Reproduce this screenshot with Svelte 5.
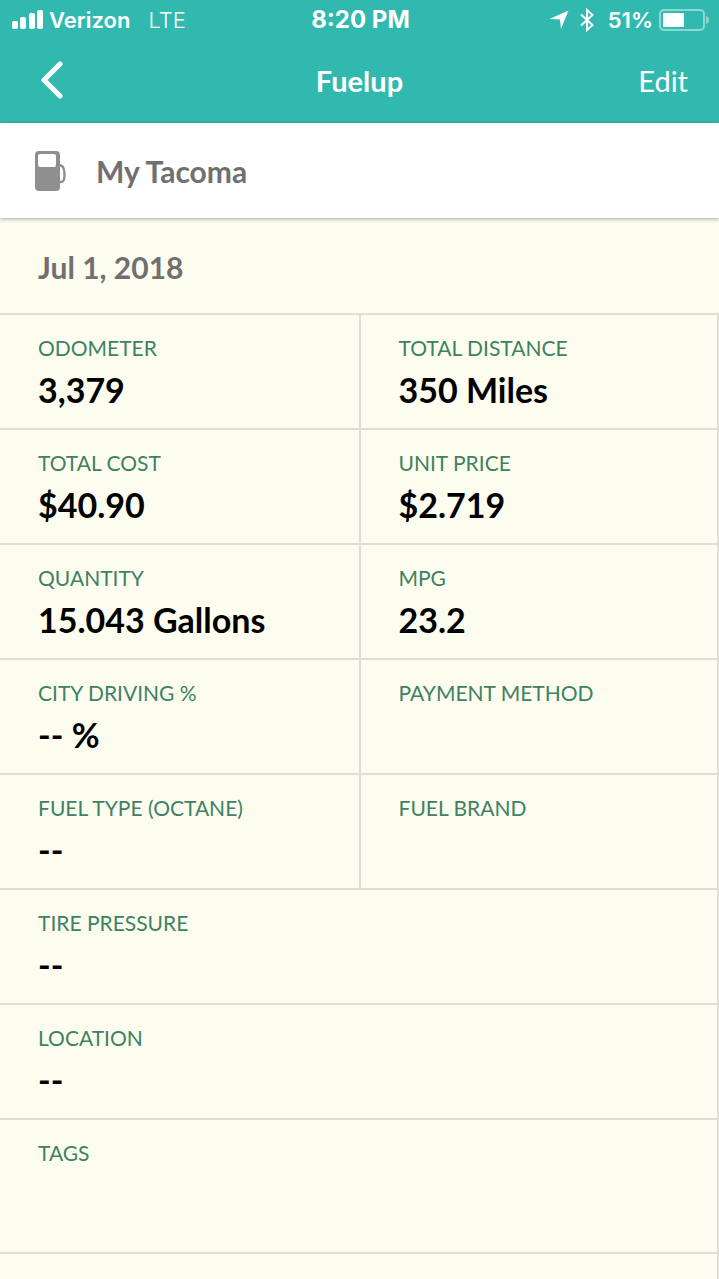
<script lang="ts">
  interface Field {
    label: string;
    value?: string;
    wide?: boolean;
    tall?: boolean;
  }

  const vehicle = 'My Tacoma';
  const date = 'Jul 1, 2018';
  const battery = 51;

  const fields: Field[] = [
    { label: 'Odometer', value: '3,379' },
    { label: 'Total Distance', value: '350 Miles' },
    { label: 'Total Cost', value: '$40.90' },
    { label: 'Unit Price', value: '$2.719' },
    { label: 'Quantity', value: '15.043 Gallons' },
    { label: 'MPG', value: '23.2' },
    { label: 'City Driving %', value: '-- %' },
    { label: 'Payment Method' },
    { label: 'Fuel Type (Octane)', value: '--' },
    { label: 'Fuel Brand' },
    { label: 'Tire Pressure', value: '--', wide: true },
    { label: 'Location', value: '--', wide: true },
    { label: 'Tags', wide: true, tall: true },
  ];
</script>

<div class="screen">
  <header>
    <div class="status">
      <div class="carrier">
        <svg width="32" height="20" viewBox="0 0 32 20" fill="currentColor">
          <rect x="0" y="11" width="6" height="8" rx="2" />
          <rect x="8" y="7" width="6" height="12" rx="2" />
          <rect x="17" y="3" width="6" height="16" rx="2" />
          <rect x="25" y="0" width="6" height="19" rx="2" />
        </svg>
        <span class="name">Verizon</span>
        <span class="network">LTE</span>
      </div>
      <div class="time">8:20 PM</div>
      <div class="indicators">
        <svg width="20" height="20" viewBox="0 0 20 20" fill="currentColor">
          <path d="M19.5 0.5 L12 19 L11 9.5 L0.5 9 Z" />
        </svg>
        <svg class="bluetooth" width="14" height="24" viewBox="0 0 14 24" fill="none" stroke="currentColor" stroke-width="2">
          <path d="M1 6.5 L12.5 17 L7 22 V2 L12.5 7 L1 17.5" />
        </svg>
        <span class="percent">{battery}%</span>
        <svg width="50" height="22" viewBox="0 0 50 22">
          <rect x="1" y="1" width="44" height="20" rx="4" fill="none" stroke="#fff" stroke-opacity="0.45" stroke-width="2" />
          <rect x="4" y="4" width={battery * 0.41} height="14" rx="1" fill="#fff" />
          <path d="M47 7 Q50 8 50 11 Q50 14 47 15 Z" fill="#fff" fill-opacity="0.45" />
        </svg>
      </div>
    </div>
    <nav>
      <button class="back" aria-label="Back">
        <svg width="24" height="40" viewBox="0 0 24 40" fill="none" stroke="currentColor" stroke-width="5" stroke-linecap="round" stroke-linejoin="round">
          <path d="M20 3 L4 19 L20 35" />
        </svg>
      </button>
      <h1>Fuelup</h1>
      <button class="edit">Edit</button>
    </nav>
  </header>

  <section class="vehicle">
    <svg width="32" height="40" viewBox="0 0 32 40">
      <rect x="0" y="0" width="25" height="40" rx="4" fill="#8f8f8f" />
      <rect x="3" y="3" width="18" height="13" rx="2" fill="#fff" />
      <path d="M24 14 C28 14 29.5 18 29.5 23 C29.5 28 29 31 26.5 31 L24 31" fill="none" stroke="#8f8f8f" stroke-width="2.4" />
    </svg>
    <h2>{vehicle}</h2>
  </section>

  <main>
    <h2 class="date">{date}</h2>
    <dl>
      {#each fields as field}
        <div class="field" class:wide={field.wide} class:tall={field.tall}>
          <dt>{field.label}</dt>
          <dd>{field.value ?? ''}</dd>
        </div>
      {/each}
    </dl>
  </main>
</div>

<style>
  :global(body) {
    margin: 0;
    background: #fdfdef;
  }

  .screen {
    display: flex;
    flex-direction: column;
    min-height: 100vh;
    font-family: Lato, sans-serif;
    color: #000;
  }

  header {
    background: #32b9af;
    color: #fff;
  }

  .status {
    display: grid;
    grid-template-columns: 1fr auto 1fr;
    align-items: center;
    height: 40px;
    padding: 0 10px 0 12px;
    font-family: Inter, sans-serif;
    font-size: 22px;
    line-height: 28px;
  }

  .carrier,
  .indicators {
    display: flex;
    align-items: center;
  }

  .name {
    margin-left: 5px;
    font-weight: 600;
  }

  .network {
    margin-left: 18px;
    font-weight: 300;
  }

  .time {
    font-weight: 700;
    font-size: 24px;
  }

  .indicators {
    justify-content: flex-end;
  }

  .bluetooth {
    margin: 0 14px 0 11px;
  }

  .percent {
    margin-right: 6px;
    font-weight: 600;
  }

  nav {
    display: grid;
    grid-template-columns: 1fr auto 1fr;
    align-items: center;
    height: 83px;
    box-sizing: border-box;
    padding: 0 31px 2px;
  }

  h1 {
    margin: 0;
    font-size: 29px;
    font-weight: 700;
    line-height: 40px;
  }

  button {
    padding: 0;
    border: 0;
    background: none;
    color: inherit;
    font: inherit;
    cursor: pointer;
  }

  .back {
    display: flex;
    justify-self: start;
    padding-left: 9px;
  }

  .edit {
    justify-self: end;
    font-size: 29px;
    line-height: 40px;
  }

  .vehicle {
    display: flex;
    align-items: center;
    gap: 29px;
    position: relative;
    height: 95px;
    padding: 0 35px;
    background: #fff;
    box-shadow: 0 1px 4px rgba(0, 0, 0, 0.35);
  }

  h2 {
    margin: 0;
    color: #707070;
    font-size: 30px;
    font-weight: 700;
    line-height: 40px;
  }

  main {
    display: flex;
    flex: 1;
    flex-direction: column;
    background: #fdfdef;
  }

  .date {
    padding: 29px 38px 26px;
  }

  dl {
    display: grid;
    flex: 1;
    grid-template-columns: 1fr 1fr;
    align-content: start;
    margin: 0;
    border-top: 2px solid #dfdfd5;
    border-right: 2px solid #dfdfd5;
  }

  .field {
    box-sizing: border-box;
    min-height: 115px;
    padding: 19px 38px 0;
    border-bottom: 2px solid #dfdfd5;
  }

  .field:not(.wide):nth-child(even) {
    border-left: 2px solid #dfdfd5;
  }

  .wide {
    grid-column: span 2;
  }

  .tall {
    min-height: 134px;
  }

  dt {
    color: #3f8163;
    font-size: 21px;
    line-height: 28px;
    text-transform: uppercase;
  }

  dd {
    margin: 8px 0 0;
    font-size: 34px;
    font-weight: 700;
    line-height: 40px;
  }
</style>
